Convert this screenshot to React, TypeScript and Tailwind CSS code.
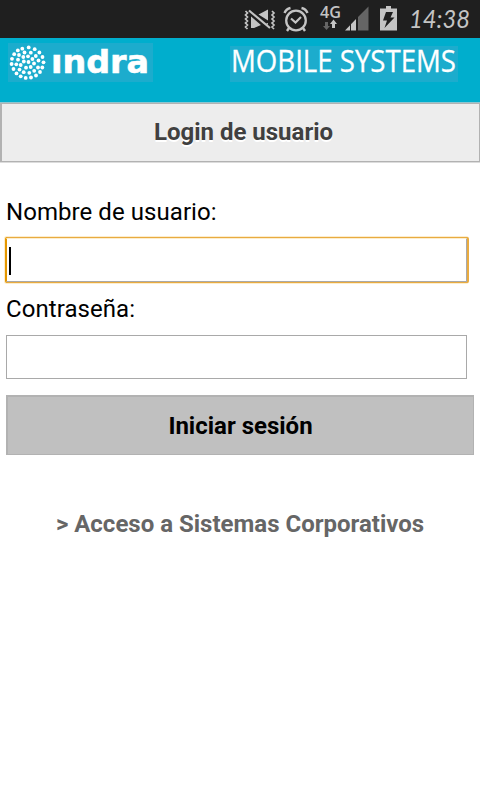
import type { ReactNode } from 'react'

const dots = [
  [20.7, 4.4], [14.3, 5.7], [26.7, 6.2], [9.8, 7.4], [31.4, 9.5], [6.2, 11.2],
  [34.5, 14], [4, 15.8], [35.5, 19.3], [3.6, 21], [34.3, 24.5], [5.5, 26],
  [32, 29], [8.5, 30.4], [28, 32.5], [12.7, 33.3], [23, 34.5], [17.7, 34.9],
  [16.5, 9.5], [22.8, 9.7], [11, 12], [27.8, 13], [15.3, 14], [20, 13.3],
  [10, 16.7], [24.4, 16], [30.5, 17.5], [8.3, 21.3], [12.7, 22], [15.8, 18.5],
  [20.5, 19], [26, 20.5], [30, 24.5], [18, 24.7], [22.7, 24], [11.5, 26.6],
  [15.7, 29.2], [21.3, 29.8], [26.2, 27.8],
]

function StatusBar() {
  return (
    <div className="h-[38px] bg-[#1f1f1f]">
      <svg width="480" height="38" fill="none" stroke="#c4c4c4">
        {/* Vibration off */}
        <path d="M245.500 11l2 2-2 2 2 2-2 2 2 2-2 2 2 2-2 2 2 2M272 11l2 2-2 2 2 2-2 2 2 2-2 2 2 2-2 2 2 2" strokeWidth="1.700" />
        <path d="M251 13.500l12 11-2 .500-7 3h-3zM258.500 14.500l9.500-5v11zM264 24l4-1v5z" fill="#c4c4c4" stroke="none" />
        <path d="M250 12.500l19 16.500" stroke="#1f1f1f" strokeWidth="4.500" />
        <path d="M249 10.500l21 17.500" strokeWidth="2.200" />
        <path d="M251 17.500v9.500h4.500l3.500-2.500z" fill="#c4c4c4" stroke="none" />
        {/* Alarm */}
        <circle cx="296" cy="20.500" r="9.800" strokeWidth="2.300" />
        <path d="M291 18.500l4.500 4 5.500-5.500" strokeWidth="2.200" />
        <path d="M284.500 13q1.500-4 6-5M301.500 8q4.500 1 6 5M289 28l-2 3M303 28l2 3" strokeWidth="2.400" />
        {/* Network */}
        <text x="320" y="18" textLength="21" lengthAdjust="spacingAndGlyphs" fill="#c4c4c4" stroke="none" className="font-['Open_Sans',sans-serif] text-[16.5px] font-semibold">4G</text>
        <path d="M325 22h3v4h2l-3.500 4-3.500-4h2z" fill="#656565" stroke="none" />
        <path d="M332 28h3v-4h2l-3.500-4.500-3.500 4.500h2z" fill="#c4c4c4" stroke="none" />
        <path d="M345 30.500h11V19z" fill="#c4c4c4" stroke="none" />
        <path d="M358 30.500h10.500V6.500L358 17z" fill="#656565" stroke="none" />
        <path d="M350.500 24v7" stroke="#1f1f1f" />
        {/* Battery */}
        <path d="M380 8.500h6V6h5v2.500h6v22h-17z" fill="#c4c4c4" stroke="none" />
        <path d="M386 12h7l-2.500 5.500h4L384.500 28l2.500-7.500h-4z" fill="#1f1f1f" stroke="none" />
        <text x="409" y="28" textLength="61" lengthAdjust="spacingAndGlyphs" fill="#c4c4c4" stroke="none" className="font-[Lato,sans-serif] text-[26px] italic">14:38</text>
      </svg>
    </div>
  )
}

function Logo() {
  return (
    <svg width="145" height="39" fill="white" className="bg-[#1caccd]">
      {dots.map(([x, y]) => (
        <circle key={`${x}-${y}`} cx={x} cy={y} r="1.900" />
      ))}
      <text x="43" y="30" textLength="98" lengthAdjust="spacingAndGlyphs" stroke="white" strokeWidth="0.600" className="font-['DejaVu_Sans',sans-serif] text-[32px] font-bold">ındra</text>
    </svg>
  )
}

function Label({ children }: { children: ReactNode }) {
  return <label className="block h-7 text-2xl leading-7 tracking-[0.06px]">{children}</label>
}

function App() {
  return (
    <div className="h-[800px] w-[480px] overflow-hidden bg-white font-[Roboto,sans-serif] text-black">
      <StatusBar />

      <header className="flex h-16 items-start justify-between bg-[#00aecd] pt-[5px] pr-[22px] pl-2">
        <Logo />
        <svg width="228" height="36" fill="white" className="mt-[3px] overflow-visible bg-[#1caccd]">
          <text x="1" y="26" textLength="225" lengthAdjust="spacingAndGlyphs" stroke="white" strokeWidth="0.300" className="font-['Open_Sans',sans-serif] text-[30.5px]">MOBILE SYSTEMS</text>
        </svg>
      </header>

      <div className="h-[60px] border-t border-[#8fc5cf] shadow-[0_1px_0_#dcdcdc]">
        <div className="flex h-[59px] items-center justify-center border border-l-2 border-[#b2b2b2] bg-[#ededed] pb-px pl-[6px]">
          <h1 className="text-2xl font-bold text-[#404040] [text-shadow:0_2px_0_white]">Login de usuario</h1>
        </div>
      </div>

      <main className="px-1.5 pt-9">
        <Label>Nombre de usuario:</Label>
        <div className="mt-3 flex h-11 w-[461px] items-center rounded-[1px] border border-t-[#fcedcd] border-r-[#a9a9a9] border-b-[#a9a9a9] border-l-[#e59700] pt-[2px] pl-[2px] shadow-[1px_0_0_1px_#e9ab40,0_0_0_1px_#e59700,0_0_0_2px_#fcedcd]">
          <span className="h-7 w-[2px] bg-black" />
        </div>
        <div className="mt-[13px]">
          <Label>Contraseña:</Label>
        </div>
        <div className="mt-3 h-11 w-[461px] border border-[#a9a9a9]" />
        <button className="mt-4 block h-[60px] w-full border border-t-2 border-l-2 border-[#b2b2b2] bg-[#c0c0c0] text-2xl font-bold">
          Iniciar sesión
        </button>
        <a className="mt-[53px] block text-center text-2xl font-bold text-[#666]">&gt; Acceso a Sistemas Corporativos</a>
      </main>
    </div>
  )
}

export default App
